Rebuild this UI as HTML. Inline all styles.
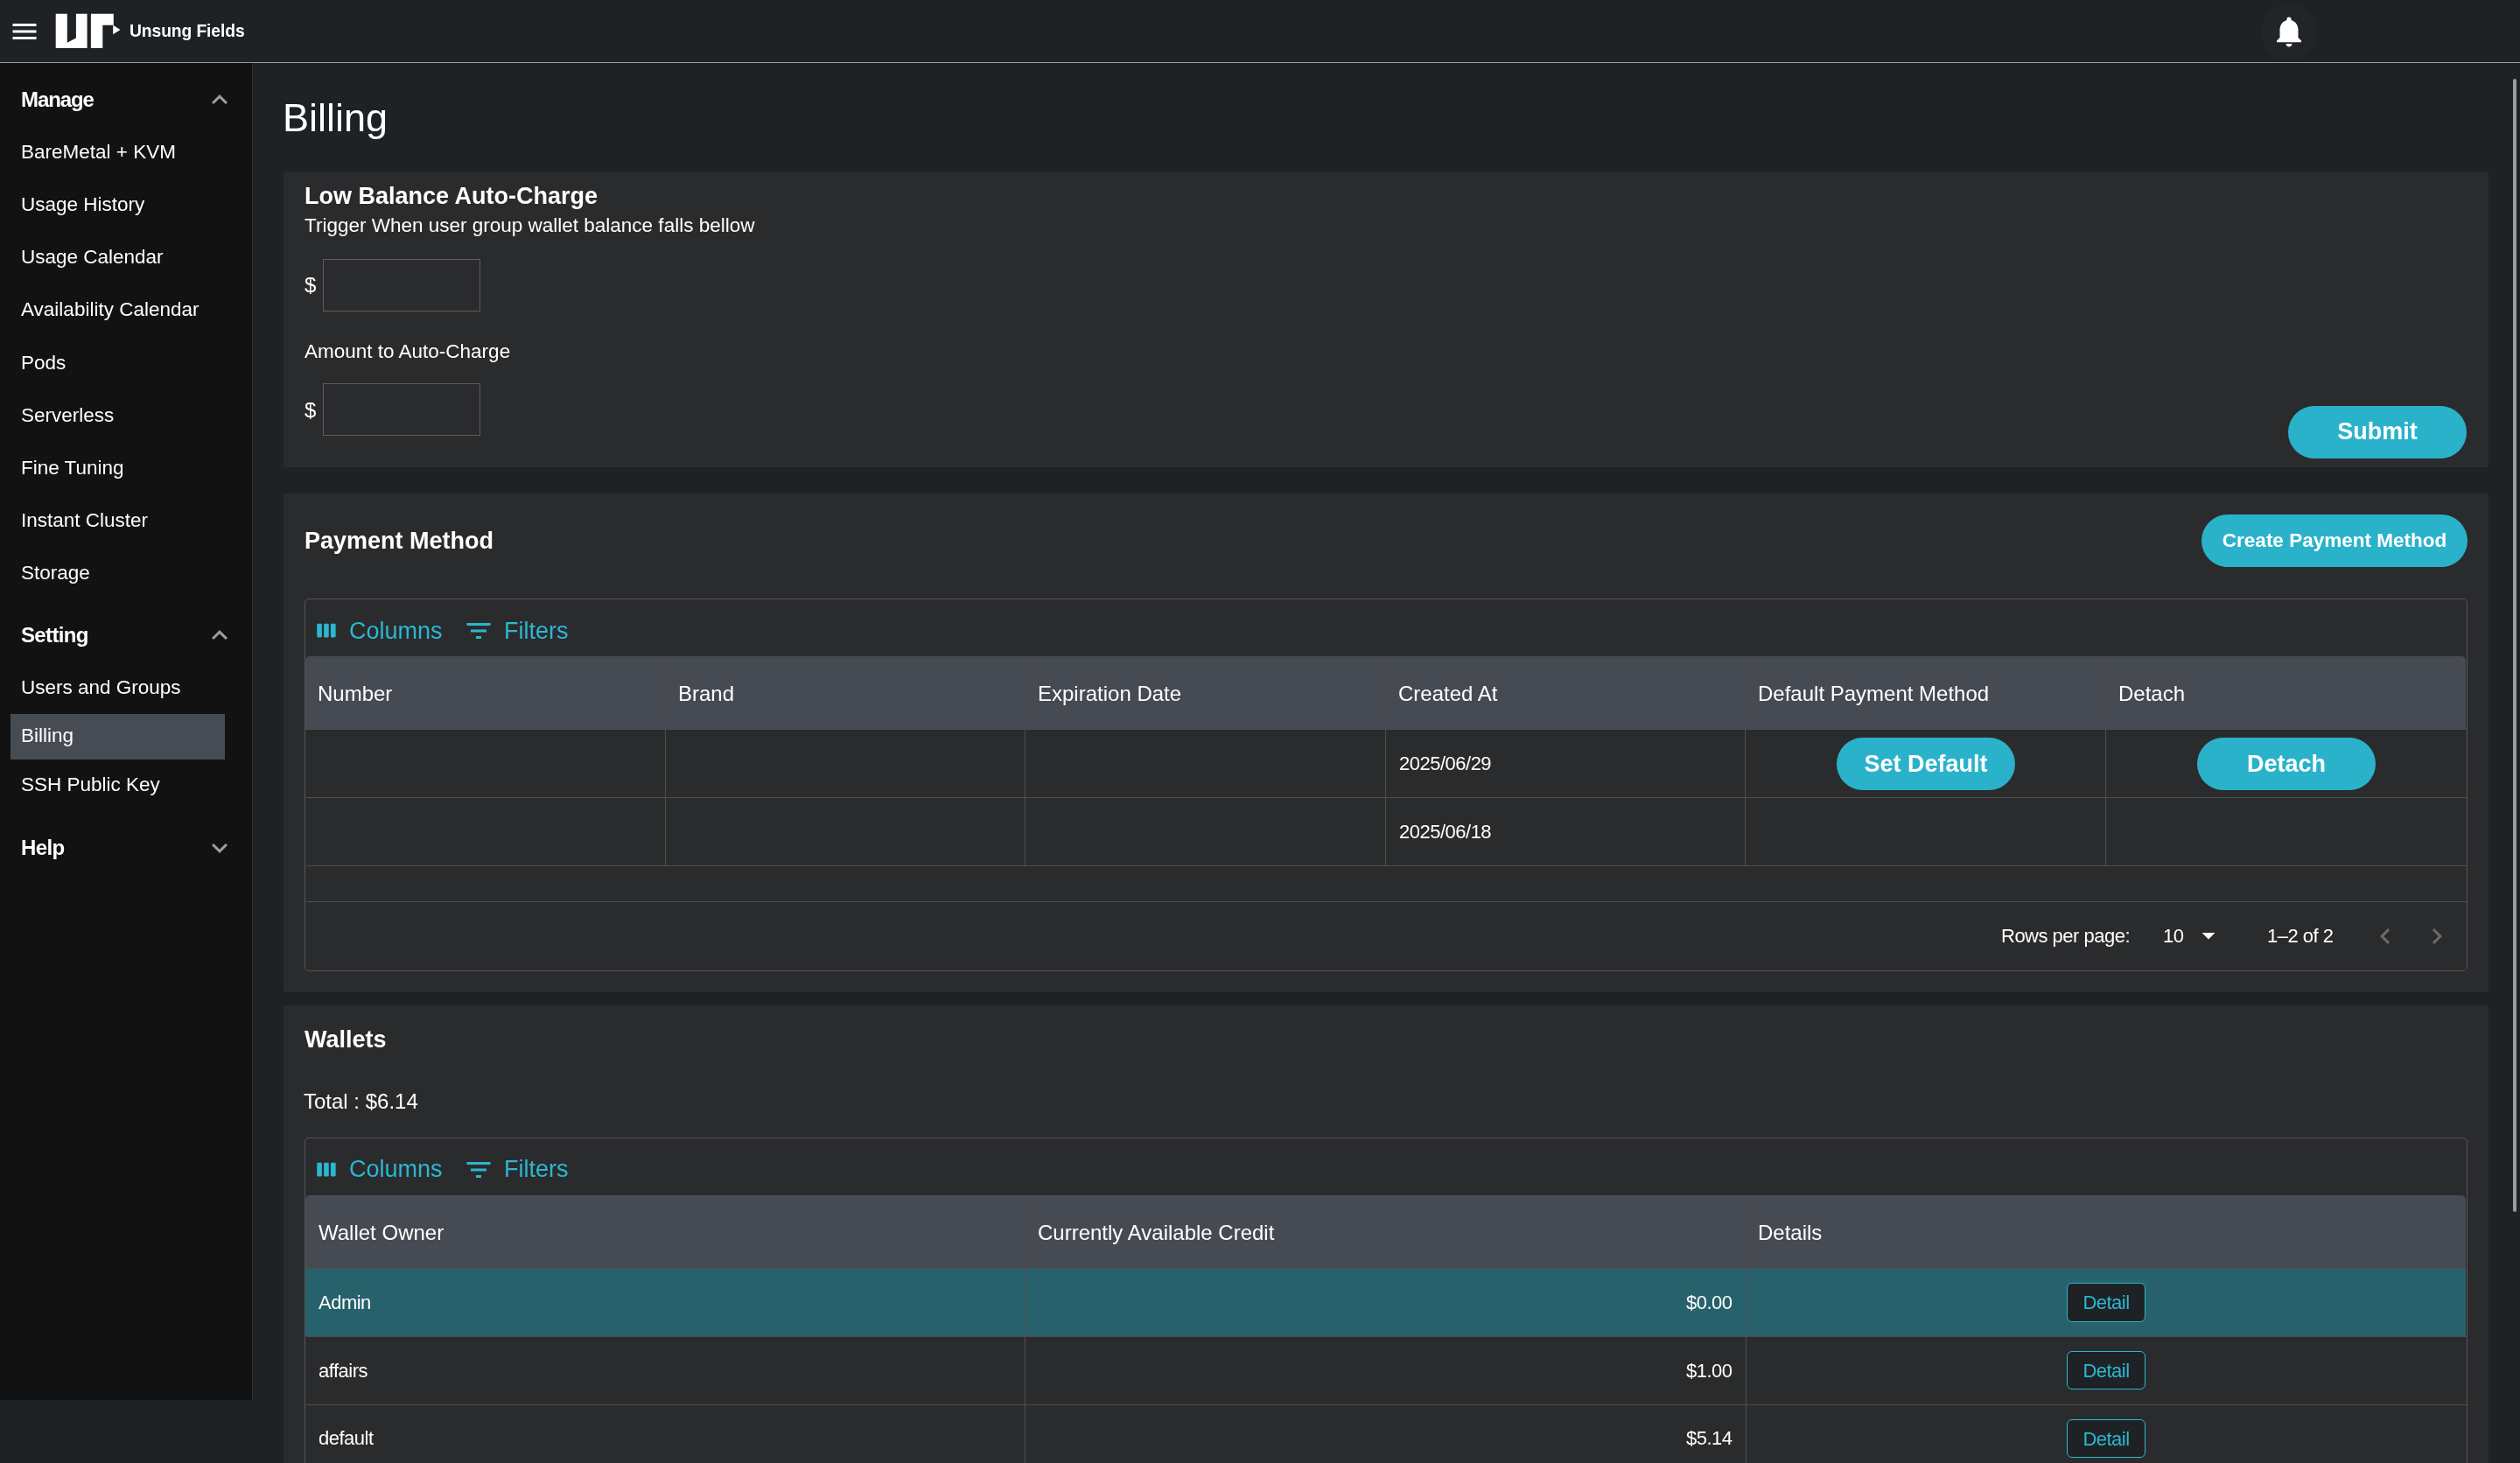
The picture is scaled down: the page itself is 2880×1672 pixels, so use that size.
<!DOCTYPE html>
<html><head><meta charset="utf-8"><title>Billing</title>
<style>
html,body{margin:0;padding:0;width:2880px;height:1672px;overflow:hidden;background:#1f2225;font-family:'Liberation Sans', sans-serif;}
</style></head><body>
<div style="position:absolute;left:0px;top:0px;width:2880px;height:71px;background:#1f2225"></div>
<div style="position:absolute;left:0px;top:71px;width:2880px;height:1px;background:#9a9a9a"></div>
<svg style="position:absolute;left:9.5px;top:18px" width="36" height="36" viewBox="0 0 24 24"><path fill="#fff" d="M3 18h18v-2H3v2zm0-5h18v-2H3v2zm0-7v2h18V6H3z"/></svg>
<svg style="position:absolute;left:0;top:0" width="150" height="70" viewBox="0 0 150 70">
<path fill="#fff" d="M63.7 15.8H76.8V48.8L86.9 43.5V15.8H99.6V55H63.7Z"/>
<path fill="#fff" d="M103.9 15.8H129.8V28.8H117.3V55H103.9Z"/>
<path fill="#fff" d="M129.2 28.8L137.5 34L129.2 39.3Z"/>
</svg>
<div style="position:absolute;left:147.6px;top:26.18px;font:700 19.3px/1 'Liberation Sans', sans-serif;color:#fff;white-space:nowrap;will-change:transform;letter-spacing:-0.1px">Unsung Fields</div>
<div style="position:absolute;left:2583.5px;top:3.5px;width:65px;height:65px;border-radius:50%;background:rgba(255,255,255,0.015)"></div>
<svg style="position:absolute;left:2595.2px;top:14.6px" width="42" height="42" viewBox="0 0 24 24"><path fill="#fff" d="M12 22c1.1 0 2-.9 2-2h-4c0 1.1.89 2 2 2zm6-6v-5c0-3.07-1.64-5.64-4.5-6.32V4c0-.83-.67-1.5-1.5-1.5s-1.5.67-1.5 1.5v.68C7.63 5.36 6 7.92 6 11v5l-2 2v1h16v-1l-2-2z"/></svg>
<div style="position:absolute;left:0px;top:72px;width:288px;height:1528px;background:#121212"></div>
<div style="position:absolute;left:288px;top:72px;width:1px;height:1528px;background:#2c2d2e"></div>
<div style="position:absolute;left:23.6px;top:102.06px;font:700 24px/1 'Liberation Sans', sans-serif;color:#fff;white-space:nowrap;will-change:transform;letter-spacing:-1.1px">Manage</div>
<svg style="position:absolute;left:232.6px;top:96px" width="36" height="36" viewBox="0 0 24 24"><path fill="#9e9e9e" d="M12 8l-6 6 1.41 1.41L12 10.83l4.59 4.58L18 14z"/></svg>
<div style="position:absolute;left:23.6px;top:163.31px;font:400 22.5px/1 'Liberation Sans', sans-serif;color:#fff;white-space:nowrap;will-change:transform;">BareMetal + KVM</div>
<div style="position:absolute;left:23.6px;top:223.36px;font:400 22.5px/1 'Liberation Sans', sans-serif;color:#fff;white-space:nowrap;will-change:transform;">Usage History</div>
<div style="position:absolute;left:23.6px;top:283.41px;font:400 22.5px/1 'Liberation Sans', sans-serif;color:#fff;white-space:nowrap;will-change:transform;">Usage Calendar</div>
<div style="position:absolute;left:23.6px;top:343.46px;font:400 22.5px/1 'Liberation Sans', sans-serif;color:#fff;white-space:nowrap;will-change:transform;">Availability Calendar</div>
<div style="position:absolute;left:23.6px;top:403.51px;font:400 22.5px/1 'Liberation Sans', sans-serif;color:#fff;white-space:nowrap;will-change:transform;">Pods</div>
<div style="position:absolute;left:23.6px;top:463.56px;font:400 22.5px/1 'Liberation Sans', sans-serif;color:#fff;white-space:nowrap;will-change:transform;">Serverless</div>
<div style="position:absolute;left:23.6px;top:523.61px;font:400 22.5px/1 'Liberation Sans', sans-serif;color:#fff;white-space:nowrap;will-change:transform;">Fine Tuning</div>
<div style="position:absolute;left:23.6px;top:583.66px;font:400 22.5px/1 'Liberation Sans', sans-serif;color:#fff;white-space:nowrap;will-change:transform;">Instant Cluster</div>
<div style="position:absolute;left:23.6px;top:643.71px;font:400 22.5px/1 'Liberation Sans', sans-serif;color:#fff;white-space:nowrap;will-change:transform;">Storage</div>
<div style="position:absolute;left:23.6px;top:713.56px;font:700 24px/1 'Liberation Sans', sans-serif;color:#fff;white-space:nowrap;will-change:transform;letter-spacing:-0.65px">Setting</div>
<svg style="position:absolute;left:232.6px;top:708px" width="36" height="36" viewBox="0 0 24 24"><path fill="#9e9e9e" d="M12 8l-6 6 1.41 1.41L12 10.83l4.59 4.58L18 14z"/></svg>
<div style="position:absolute;left:12px;top:816px;width:245px;height:52px;background:#474c54"></div>
<div style="position:absolute;left:23.6px;top:774.91px;font:400 22.5px/1 'Liberation Sans', sans-serif;color:#fff;white-space:nowrap;will-change:transform;">Users and Groups</div>
<div style="position:absolute;left:23.6px;top:830.01px;font:400 22.5px/1 'Liberation Sans', sans-serif;color:#fff;white-space:nowrap;will-change:transform;">Billing</div>
<div style="position:absolute;left:23.6px;top:885.81px;font:400 22.5px/1 'Liberation Sans', sans-serif;color:#fff;white-space:nowrap;will-change:transform;">SSH Public Key</div>
<div style="position:absolute;left:23.6px;top:957.36px;font:700 24px/1 'Liberation Sans', sans-serif;color:#fff;white-space:nowrap;will-change:transform;letter-spacing:-0.65px">Help</div>
<svg style="position:absolute;left:232.6px;top:951.4px" width="36" height="36" viewBox="0 0 24 24"><path fill="#9e9e9e" d="M16.59 8.59L12 13.17 7.41 8.59 6 10l6 6 6-6z"/></svg>
<div style="position:absolute;left:289px;top:72px;width:2591px;height:1600px;background:#1f2225"></div>
<div style="position:absolute;left:0px;top:1600px;width:289px;height:72px;background:#1f2225"></div>
<div style="position:absolute;left:2872px;top:90px;width:4px;height:1295px;background:#9a9a9a;border-radius:2px"></div>
<div style="position:absolute;left:323.0px;top:112.43px;font:400 45px/1 'Liberation Sans', sans-serif;color:#fff;white-space:nowrap;will-change:transform;">Billing</div>
<div style="position:absolute;left:324px;top:197px;width:2520px;height:337px;background:#2a2b2d"></div>
<div style="position:absolute;left:348.4px;top:211.06px;font:700 27px/1 'Liberation Sans', sans-serif;color:#fff;white-space:nowrap;will-change:transform;">Low Balance Auto-Charge</div>
<div style="position:absolute;left:348.4px;top:247.21px;font:400 22.5px/1 'Liberation Sans', sans-serif;color:#fff;white-space:nowrap;will-change:transform;">Trigger When user group wallet balance falls bellow</div>
<div style="position:absolute;left:348px;top:314.36px;font:400 24px/1 'Liberation Sans', sans-serif;color:#fff;white-space:nowrap;will-change:transform;">$</div>
<div style="position:absolute;left:369px;top:296px;width:180px;height:60px;box-sizing:border-box;border:1.5px solid #5d5d5d"></div>
<div style="position:absolute;left:348.4px;top:390.51px;font:400 22.5px/1 'Liberation Sans', sans-serif;color:#fff;white-space:nowrap;will-change:transform;">Amount to Auto-Charge</div>
<div style="position:absolute;left:348px;top:456.96px;font:400 24px/1 'Liberation Sans', sans-serif;color:#fff;white-space:nowrap;will-change:transform;">$</div>
<div style="position:absolute;left:369px;top:437.8px;width:180px;height:60px;box-sizing:border-box;border:1.5px solid #5d5d5d"></div>
<div style="position:absolute;left:2615px;top:464px;width:204px;height:60px;background:#2ab2cb;border-radius:30px"></div>
<div style="position:absolute;left:1717px;width:2000px;text-align:center;top:480.15px;font:700 27px/1 'Liberation Sans', sans-serif;color:#fff;white-space:nowrap;will-change:transform;">Submit</div>
<div style="position:absolute;left:324px;top:564px;width:2520px;height:570px;background:#2a2b2d"></div>
<div style="position:absolute;left:347.7px;top:605.06px;font:700 27px/1 'Liberation Sans', sans-serif;color:#fff;white-space:nowrap;will-change:transform;">Payment Method</div>
<div style="position:absolute;left:2516px;top:588px;width:304px;height:60px;background:#2ab2cb;border-radius:30px"></div>
<div style="position:absolute;left:1668px;width:2000px;text-align:center;top:607.21px;font:700 22.5px/1 'Liberation Sans', sans-serif;color:#fff;white-space:nowrap;will-change:transform;">Create Payment Method</div>
<div style="position:absolute;left:347.8px;top:684px;width:2471.7999999999997px;height:425.79999999999995px;box-sizing:border-box;border:1.3px solid #555555;border-radius:5px"></div>
<svg style="position:absolute;left:359.75px;top:707.3px" width="27" height="27" viewBox="0 0 24 24"><path fill="#2bb7d1" d="M6 5H3c-.55 0-1 .45-1 1v12c0 .55.45 1 1 1h3c.55 0 1-.45 1-1V6c0-.55-.45-1-1-1zm14 0h-3c-.55 0-1 .45-1 1v12c0 .55.45 1 1 1h3c.55 0 1-.45 1-1V6c0-.55-.45-1-1-1zm-7 0h-3c-.55 0-1 .45-1 1v12c0 .55.45 1 1 1h3c.55 0 1-.45 1-1V6c0-.55-.45-1-1-1z"/></svg>
<div style="position:absolute;left:398.5px;top:707.56px;font:400 27px/1 'Liberation Sans', sans-serif;color:#2bb7d1;white-space:nowrap;will-change:transform;">Columns</div>
<svg style="position:absolute;left:528.6px;top:703.0px" width="36" height="36" viewBox="0 0 24 24"><path fill="#2bb7d1" d="M10 18h4v-2h-4v2zM3 6v2h18V6H3zm3 7h12v-2H6v2z"/></svg>
<div style="position:absolute;left:576px;top:707.56px;font:400 27px/1 'Liberation Sans', sans-serif;color:#2bb7d1;white-space:nowrap;will-change:transform;">Filters</div>
<div style="position:absolute;left:349.1px;top:750px;width:2469.2px;height:83.5px;background:#464a52;border-radius:5px 5px 0 0"></div>
<div style="position:absolute;left:759.5px;top:750px;width:1px;height:239px;background:#4e4e4e"></div>
<div style="position:absolute;left:1171.0px;top:750px;width:1px;height:239px;background:#4e4e4e"></div>
<div style="position:absolute;left:1582.5px;top:750px;width:1px;height:239px;background:#4e4e4e"></div>
<div style="position:absolute;left:1994.0px;top:750px;width:1px;height:239px;background:#4e4e4e"></div>
<div style="position:absolute;left:2405.5px;top:750px;width:1px;height:239px;background:#4e4e4e"></div>
<div style="position:absolute;left:349.5px;top:833px;width:2469px;height:1.2px;background:#4e4e4e"></div>
<div style="position:absolute;left:349.5px;top:911px;width:2469px;height:1.2px;background:#4e4e4e"></div>
<div style="position:absolute;left:349.5px;top:989px;width:2469px;height:1.2px;background:#4e4e4e"></div>
<div style="position:absolute;left:349.5px;top:1030px;width:2469px;height:1.2px;background:#4e4e4e"></div>
<div style="position:absolute;left:363.0px;top:780.96px;font:400 24px/1 'Liberation Sans', sans-serif;color:#fff;white-space:nowrap;will-change:transform;">Number</div>
<div style="position:absolute;left:774.5px;top:780.96px;font:400 24px/1 'Liberation Sans', sans-serif;color:#fff;white-space:nowrap;will-change:transform;">Brand</div>
<div style="position:absolute;left:1186.0px;top:780.96px;font:400 24px/1 'Liberation Sans', sans-serif;color:#fff;white-space:nowrap;will-change:transform;">Expiration Date</div>
<div style="position:absolute;left:1597.5px;top:780.96px;font:400 24px/1 'Liberation Sans', sans-serif;color:#fff;white-space:nowrap;will-change:transform;">Created At</div>
<div style="position:absolute;left:2009.0px;top:780.96px;font:400 24px/1 'Liberation Sans', sans-serif;color:#fff;white-space:nowrap;will-change:transform;">Default Payment Method</div>
<div style="position:absolute;left:2420.5px;top:780.96px;font:400 24px/1 'Liberation Sans', sans-serif;color:#fff;white-space:nowrap;will-change:transform;">Detach</div>
<div style="position:absolute;left:1599.0px;top:862.23px;font:400 22px/1 'Liberation Sans', sans-serif;color:#fff;white-space:nowrap;will-change:transform;letter-spacing:-0.5px">2025/06/29</div>
<div style="position:absolute;left:1599.0px;top:939.63px;font:400 22px/1 'Liberation Sans', sans-serif;color:#fff;white-space:nowrap;will-change:transform;letter-spacing:-0.5px">2025/06/18</div>
<div style="position:absolute;left:2098.7px;top:843.3px;width:204px;height:60px;background:#2ab2cb;border-radius:30px"></div>
<div style="position:absolute;left:1200.6999999999998px;width:2000px;text-align:center;top:859.75px;font:700 27px/1 'Liberation Sans', sans-serif;color:#fff;white-space:nowrap;will-change:transform;">Set Default</div>
<div style="position:absolute;left:2511px;top:843.3px;width:204px;height:60px;background:#2ab2cb;border-radius:30px"></div>
<div style="position:absolute;left:1613px;width:2000px;text-align:center;top:859.75px;font:700 27px/1 'Liberation Sans', sans-serif;color:#fff;white-space:nowrap;will-change:transform;">Detach</div>
<div style="position:absolute;left:2287.4px;top:1058.73px;font:400 22px/1 'Liberation Sans', sans-serif;color:#fff;white-space:nowrap;will-change:transform;letter-spacing:-0.5px">Rows per page:</div>
<div style="position:absolute;left:2472px;top:1058.73px;font:400 22px/1 'Liberation Sans', sans-serif;color:#fff;white-space:nowrap;will-change:transform;letter-spacing:-0.5px">10</div>
<svg style="position:absolute;left:2505.5px;top:1051.4px" width="36" height="36" viewBox="0 0 24 24"><path fill="#fff" d="M7 10l5 5 5-5z"/></svg>
<div style="position:absolute;left:2591px;top:1058.73px;font:400 22px/1 'Liberation Sans', sans-serif;color:#fff;white-space:nowrap;will-change:transform;letter-spacing:-0.5px">1&ndash;2 of 2</div>
<svg style="position:absolute;left:2707.5px;top:1052px" width="36" height="36" viewBox="0 0 24 24"><path fill="#6b6b6b" d="M15.41 16.59L10.83 12l4.58-4.59L14 6l-6 6 6 6 1.41-1.41z"/></svg>
<svg style="position:absolute;left:2767.1px;top:1052px" width="36" height="36" viewBox="0 0 24 24"><path fill="#6b6b6b" d="M8.59 16.59L13.17 12 8.59 7.41 10 6l6 6-6 6-1.41-1.41z"/></svg>
<div style="position:absolute;left:324px;top:1149px;width:2520px;height:600px;background:#2a2b2d"></div>
<div style="position:absolute;left:348.2px;top:1174.95px;font:700 27px/1 'Liberation Sans', sans-serif;color:#fff;white-space:nowrap;will-change:transform;">Wallets</div>
<div style="position:absolute;left:346.9px;top:1246.96px;font:400 24px/1 'Liberation Sans', sans-serif;color:#fff;white-space:nowrap;will-change:transform;">Total : $6.14</div>
<div style="position:absolute;left:347.8px;top:1299.8px;width:2471.7999999999997px;height:500px;box-sizing:border-box;border:1.3px solid #555555;border-radius:5px"></div>
<svg style="position:absolute;left:359.75px;top:1323.1px" width="27" height="27" viewBox="0 0 24 24"><path fill="#2bb7d1" d="M6 5H3c-.55 0-1 .45-1 1v12c0 .55.45 1 1 1h3c.55 0 1-.45 1-1V6c0-.55-.45-1-1-1zm14 0h-3c-.55 0-1 .45-1 1v12c0 .55.45 1 1 1h3c.55 0 1-.45 1-1V6c0-.55-.45-1-1-1zm-7 0h-3c-.55 0-1 .45-1 1v12c0 .55.45 1 1 1h3c.55 0 1-.45 1-1V6c0-.55-.45-1-1-1z"/></svg>
<div style="position:absolute;left:398.5px;top:1323.35px;font:400 27px/1 'Liberation Sans', sans-serif;color:#2bb7d1;white-space:nowrap;will-change:transform;">Columns</div>
<svg style="position:absolute;left:528.6px;top:1318.8px" width="36" height="36" viewBox="0 0 24 24"><path fill="#2bb7d1" d="M10 18h4v-2h-4v2zM3 6v2h18V6H3zm3 7h12v-2H6v2z"/></svg>
<div style="position:absolute;left:576px;top:1323.35px;font:400 27px/1 'Liberation Sans', sans-serif;color:#2bb7d1;white-space:nowrap;will-change:transform;">Filters</div>
<div style="position:absolute;left:349.1px;top:1366.4px;width:2469.2px;height:83px;background:#464a52;border-radius:5px 5px 0 0"></div>
<div style="position:absolute;left:349.1px;top:1449.3px;width:2469.2px;height:78px;background:#27616c"></div>
<div style="position:absolute;left:1170.5px;top:1366.4px;width:1px;height:400px;background:#4e4e4e"></div>
<div style="position:absolute;left:1994.5px;top:1366.4px;width:1px;height:400px;background:#4e4e4e"></div>
<div style="position:absolute;left:349.5px;top:1449px;width:2469px;height:1.2px;background:#4e4e4e"></div>
<div style="position:absolute;left:349.5px;top:1527px;width:2469px;height:1.2px;background:#4e4e4e"></div>
<div style="position:absolute;left:349.5px;top:1605px;width:2469px;height:1.2px;background:#4e4e4e"></div>
<div style="position:absolute;left:363.5px;top:1396.96px;font:400 24px/1 'Liberation Sans', sans-serif;color:#fff;white-space:nowrap;will-change:transform;">Wallet Owner</div>
<div style="position:absolute;left:1186.2px;top:1396.96px;font:400 24px/1 'Liberation Sans', sans-serif;color:#fff;white-space:nowrap;will-change:transform;">Currently Available Credit</div>
<div style="position:absolute;left:2009px;top:1396.96px;font:400 24px/1 'Liberation Sans', sans-serif;color:#fff;white-space:nowrap;will-change:transform;">Details</div>
<div style="position:absolute;left:364.3px;top:1477.63px;font:400 22px/1 'Liberation Sans', sans-serif;color:#fff;white-space:nowrap;will-change:transform;letter-spacing:-0.5px">Admin</div>
<div style="position:absolute;right:900.5px;top:1477.63px;font:400 22px/1 'Liberation Sans', sans-serif;color:#fff;white-space:nowrap;will-change:transform;letter-spacing:-0.5px">$0.00</div>
<div style="position:absolute;left:2362px;top:1466.0px;width:90px;height:44.5px;box-sizing:border-box;border:1.5px solid #2bb7d1;border-radius:6px;background:#1f2225"></div>
<div style="position:absolute;left:1407px;width:2000px;text-align:center;top:1478.33px;font:400 22px/1 'Liberation Sans', sans-serif;color:#2bb7d1;white-space:nowrap;will-change:transform;letter-spacing:-0.5px">Detail</div>
<div style="position:absolute;left:364.3px;top:1555.53px;font:400 22px/1 'Liberation Sans', sans-serif;color:#fff;white-space:nowrap;will-change:transform;letter-spacing:-0.5px">affairs</div>
<div style="position:absolute;right:900.5px;top:1555.53px;font:400 22px/1 'Liberation Sans', sans-serif;color:#fff;white-space:nowrap;will-change:transform;letter-spacing:-0.5px">$1.00</div>
<div style="position:absolute;left:2362px;top:1543.9px;width:90px;height:44.5px;box-sizing:border-box;border:1.5px solid #2bb7d1;border-radius:6px;background:#1f2225"></div>
<div style="position:absolute;left:1407px;width:2000px;text-align:center;top:1556.23px;font:400 22px/1 'Liberation Sans', sans-serif;color:#2bb7d1;white-space:nowrap;will-change:transform;letter-spacing:-0.5px">Detail</div>
<div style="position:absolute;left:364.3px;top:1633.43px;font:400 22px/1 'Liberation Sans', sans-serif;color:#fff;white-space:nowrap;will-change:transform;letter-spacing:-0.5px">default</div>
<div style="position:absolute;right:900.5px;top:1633.43px;font:400 22px/1 'Liberation Sans', sans-serif;color:#fff;white-space:nowrap;will-change:transform;letter-spacing:-0.5px">$5.14</div>
<div style="position:absolute;left:2362px;top:1621.8px;width:90px;height:44.5px;box-sizing:border-box;border:1.5px solid #2bb7d1;border-radius:6px;background:#1f2225"></div>
<div style="position:absolute;left:1407px;width:2000px;text-align:center;top:1634.13px;font:400 22px/1 'Liberation Sans', sans-serif;color:#2bb7d1;white-space:nowrap;will-change:transform;letter-spacing:-0.5px">Detail</div>
</body></html>
